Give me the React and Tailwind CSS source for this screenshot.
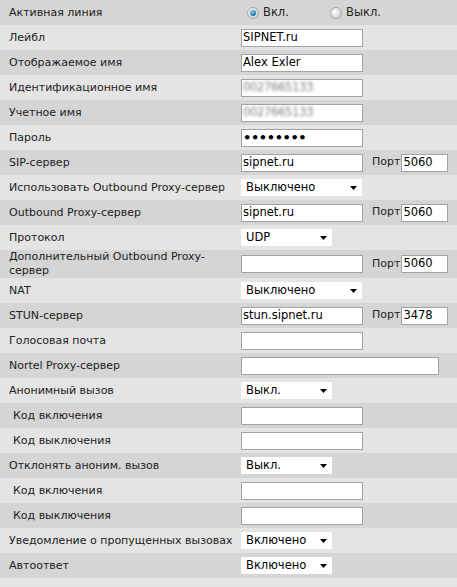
import React from 'react';

const rows = [
  { label: 'Активная линия', type: 'radio' },
  { label: 'Лейбл', type: 'input', value: 'SIPNET.ru' },
  { label: 'Отображаемое имя', type: 'input', value: 'Alex Exler' },
  { label: 'Идентификационное имя', type: 'blur' },
  { label: 'Учетное имя', type: 'blur' },
  { label: 'Пароль', type: 'password' },
  { label: 'SIP-сервер', type: 'input', value: 'sipnet.ru', port: '5060' },
  { label: 'Использовать Outbound Proxy-сервер', type: 'select', value: 'Выключено', wide: true },
  { label: 'Outbound Proxy-сервер', type: 'input', value: 'sipnet.ru', port: '5060' },
  { label: 'Протокол', type: 'select', value: 'UDP' },
  { label: 'Дополнительный Outbound Proxy-сервер', type: 'input', value: '', port: '5060', tall: true },
  { label: 'NAT', type: 'select', value: 'Выключено', wide: true },
  { label: 'STUN-сервер', type: 'input', value: 'stun.sipnet.ru', port: '3478' },
  { label: 'Голосовая почта', type: 'input', value: '' },
  { label: 'Nortel Proxy-сервер', type: 'input', value: '', long: true },
  { label: 'Анонимный вызов', type: 'select', value: 'Выкл.' },
  { label: 'Код включения', type: 'input', value: '', indent: true },
  { label: 'Код выключения', type: 'input', value: '', indent: true },
  { label: 'Отклонять аноним. вызов', type: 'select', value: 'Выкл.' },
  { label: 'Код включения', type: 'input', value: '', indent: true },
  { label: 'Код выключения', type: 'input', value: '', indent: true },
  { label: 'Уведомление о пропущенных вызовах', type: 'select', value: 'Включено' },
  { label: 'Автоответ', type: 'select', value: 'Включено' },
];

function Radio({ checked }) {
  return (
    <svg width="12" height="12" viewBox="0 0 12 12">
      <defs>
        <radialGradient id={checked ? 'rg1' : 'rg0'} cx="0.4" cy="0.4" r="0.7">
          <stop offset="0" stopColor="#ffffff" />
          <stop offset="1" stopColor="#c8c8c8" />
        </radialGradient>
        <radialGradient id="dot" cx="0.4" cy="0.35" r="0.7">
          <stop offset="0" stopColor="#7fd4ff" />
          <stop offset="1" stopColor="#0a5f9a" />
        </radialGradient>
      </defs>
      <circle cx="6" cy="6" r="5.5" fill={`url(#${checked ? 'rg1' : 'rg0'})`} stroke="#a8a8a8" strokeWidth="1" />
      {checked && <circle cx="6" cy="6" r="3" fill="url(#dot)" />}
    </svg>
  );
}

function TextBox({ children, long }) {
  return (
    <div
      className={`${long ? 'w-[198px]' : 'w-[122px]'} h-[18px] bg-white border border-[#a3a3a3] pl-[1px] flex items-center text-[11.5px] text-black overflow-hidden whitespace-nowrap`}
    >
      {children}
    </div>
  );
}

function Select({ value, wide }) {
  return (
    <div className={`${wide ? 'w-[121px]' : 'w-[91px]'} h-[17px] bg-white flex items-center justify-between pl-[5px] pr-[5px] text-[11.5px] text-black`}>
      <span>{value}</span>
      <svg width="7" height="4" viewBox="0 0 7 4">
        <path d="M0 0 H7 L3.5 4 Z" fill="#000" />
      </svg>
    </div>
  );
}

function Control({ row }) {
  if (row.type === 'radio') {
    return (
      <div className="flex items-center text-[11.5px] text-[#222]">
        <div className="flex items-center w-[89px] pl-[6px]">
          <Radio checked />
          <span className="ml-[4px]">Вкл.</span>
        </div>
        <div className="flex items-center">
          <Radio />
          <span className="ml-[4px]">Выкл.</span>
        </div>
      </div>
    );
  }
  if (row.type === 'select') return <Select value={row.value} wide={row.wide} />;
  let inner = row.value;
  if (row.type === 'blur') {
    inner = <span className="text-[#4a4a4a] blur-[1.4px] tracking-[-0.3px] opacity-70">0027665133</span>;
  }
  if (row.type === 'password') {
    inner = <span className="text-[13px] leading-none font-bold tracking-[-0.4px]">••••••••</span>;
  }
  return (
    <div className="flex items-center">
      <TextBox long={row.long}>{inner}</TextBox>
      {row.port && (
        <>
          <span className="ml-[9px] mr-[1px] whitespace-nowrap text-[11px] text-[#222]">Порт</span>
          <div className="w-[47px] h-[18px] bg-white border border-[#a3a3a3] pl-[1px] flex items-center text-[11.5px] text-black">
            {row.port}
          </div>
        </>
      )}
    </div>
  );
}

export default function App() {
  return (
    <div className="w-[457px] min-h-screen bg-[#e4e4e4] font-['DejaVu_Sans',sans-serif] text-[11px] text-[#222]">
      {rows.map((row, i) => (
        <div
          key={i}
          className={`flex items-center ${row.tall ? 'h-[28px]' : 'h-[25px]'} ${i % 2 === 0 ? 'bg-[#d5d5d5]' : 'bg-[#e4e4e4]'}`}
        >
          <div className={`w-[241px] shrink-0 leading-[14px] text-[11px] ${row.indent ? 'pl-[13px]' : 'pl-[9px]'} ${row.tall ? 'pr-[30px]' : 'whitespace-nowrap'}`}>
            {row.label}
          </div>
          <Control row={row} />
        </div>
      ))}
    </div>
  );
}
